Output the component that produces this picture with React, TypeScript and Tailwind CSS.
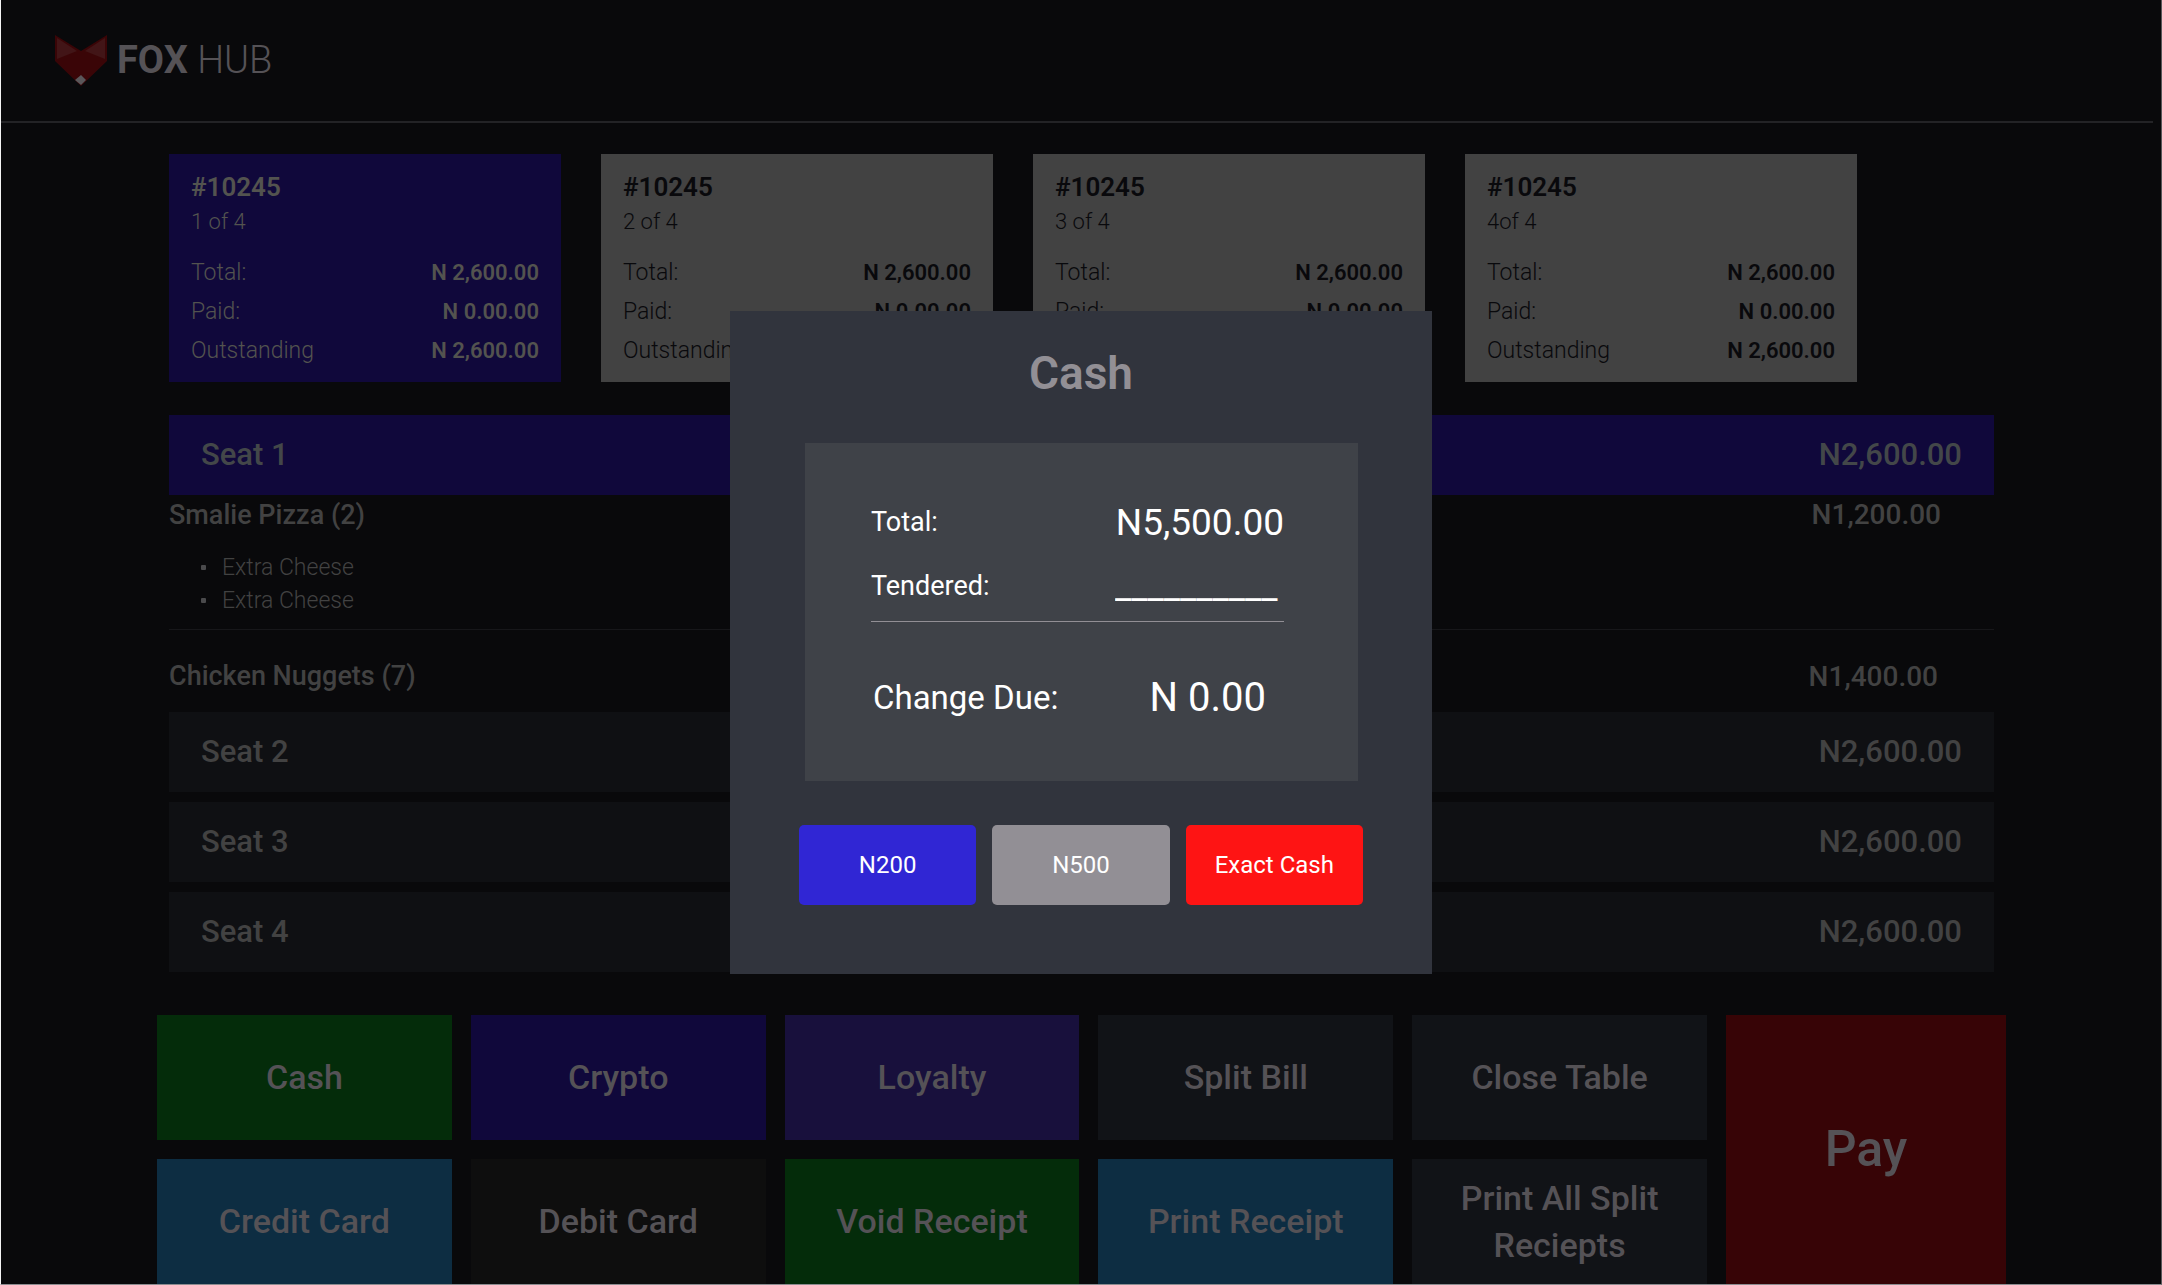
import clsx from "clsx";

interface Bill {
  part: string;
  active?: boolean;
}

interface Action {
  label: string;
  color: string;
}

const bills: Bill[] = [
  { part: "1 of 4", active: true },
  { part: "2 of 4" },
  { part: "3 of 4" },
  { part: "4of 4" },
];

const billRows = [
  { label: "Total:", value: "N 2,600.00" },
  { label: "Paid:", value: "N 0.00.00" },
  { label: "Outstanding", value: "N 2,600.00" },
];

const seats = ["Seat 2", "Seat 3", "Seat 4"];

const actions: Action[] = [
  { label: "Cash", color: "bg-[#042c0a]" },
  { label: "Crypto", color: "bg-[#10083b]" },
  { label: "Loyalty", color: "bg-[#18103c]" },
  { label: "Split Bill", color: "bg-[#111317]" },
  { label: "Close Table", color: "bg-[#111317]" },
  { label: "Credit Card", color: "bg-[#0d2d42]" },
  { label: "Debit Card", color: "bg-[#0e0e0e]" },
  { label: "Void Receipt", color: "bg-[#042c0a]" },
  { label: "Print Receipt", color: "bg-[#0d2d42]" },
  { label: "Print All Split Reciepts", color: "bg-[#111317]" },
];

function FoxLogo() {
  return (
    <svg width="52" height="51" viewBox="0 0 52 51" aria-hidden="true">
      <path d="M0 0 26 16 52 0v26L26 51 0 26Z" fill="#3a0507" />
      <path d="M2 3 22 16 2 24Z" fill="#421517" />
      <path d="M50 3 30 16 50 24Z" fill="#421517" />
      <path d="M26 40 31 45 26 50 20 45Z" fill="#5a575a" />
    </svg>
  );
}

function BillCard({ part, active }: Bill) {
  return (
    <article
      className={clsx(
        "h-[228px] px-[22px] pt-4",
        active ? "bg-[#10083b] text-[#53534f]" : "bg-[#424242] text-[#09090c]"
      )}
    >
      <h2 className="text-[26px] leading-[34px] font-semibold">#10245</h2>
      <p className="text-[22px] leading-[36px] font-light">{part}</p>
      <dl className="mt-[13px]">
        {billRows.map((row) => (
          <div key={row.label} className="flex justify-between leading-[39px]">
            <dt className="text-[23px] font-light">{row.label}</dt>
            <dd className="text-[22px] font-semibold">{row.value}</dd>
          </div>
        ))}
      </dl>
    </article>
  );
}

function SeatBar({ name, active }: { name: string; active?: boolean }) {
  return (
    <button
      type="button"
      className={clsx(
        "flex h-20 w-full items-center justify-between px-8 text-[31px] font-medium",
        active ? "bg-[#10083b] text-[#434749]" : "bg-[#0f1013] text-[#424242]"
      )}
    >
      <span>{name}</span>
      <span>N2,600.00</span>
    </button>
  );
}

function CashDialog() {
  return (
    <div className="absolute inset-0 flex items-center justify-center">
      <section
        role="dialog"
        aria-labelledby="cash-title"
        className="w-[702px] bg-[#31343d] px-[69px] pt-[34px] pb-[69px]"
      >
        <h1
          id="cash-title"
          className="text-center text-[46px] leading-[56px] font-semibold text-[#928f95]"
        >
          Cash
        </h1>
        <div className="mr-[5px] ml-[6px] mt-[42px] bg-[#3f4248] pt-12 pr-[74px] pb-[51px] pl-[66px] text-white">
          <div className="flex h-16 items-center justify-between">
            <span className="text-[27px]">Total:</span>
            <span className="text-[37px]">N5,500.00</span>
          </div>
          <div className="flex h-[67px] items-center justify-between border-b border-[#928f95] pb-[3px]">
            <label htmlFor="tendered" className="text-[27px]">
              Tendered:
            </label>
            <input
              id="tendered"
              type="text"
              defaultValue="__________"
              className="w-[169px] bg-transparent text-[36px] outline-none"
            />
          </div>
          <div className="mt-11 flex h-16 items-center justify-between pr-[18px] pl-[2px]">
            <span className="text-[33px]">Change Due:</span>
            <span className="text-[40px]">N 0.00</span>
          </div>
        </div>
        <div className="mt-11 grid grid-cols-3 gap-4 text-2xl text-white">
          <button type="button" className="h-20 rounded-[5px] bg-[#3026d4]">
            N200
          </button>
          <button type="button" className="h-20 rounded-[5px] bg-[#928f95]">
            N500
          </button>
          <button type="button" className="h-20 rounded-[5px] bg-[#fe1414]">
            Exact Cash
          </button>
        </div>
      </section>
    </div>
  );
}

export default function App() {
  return (
    <div className="relative min-h-screen border-r border-b border-l border-r-[#58585a] border-b-[#8c8c90] border-l-[#f4f4f4] bg-[#09090b] font-['Roboto','Liberation_Sans',sans-serif]">
      <header className="mr-2 flex h-[123px] items-center gap-[10px] border-b-2 border-[#232326] pl-[54px] text-[38px] text-[#555256]">
        <FoxLogo />
        <p>
          <span className="font-bold">FOX</span>{" "}
          <span className="font-light">HUB</span>
        </p>
      </header>

      <main>
        <div className="pt-[31px] pr-[167px] pl-[168px]">
          <div className="mr-[137px] grid grid-cols-4 gap-10">
            {bills.map((bill) => (
              <BillCard key={bill.part} {...bill} />
            ))}
          </div>

          <div className="mt-[33px] text-[#424242]">
            <SeatBar name="Seat 1" active />
            <div className="border-b border-[#17171a] pb-3">
              <div className="flex h-10 items-center justify-between pr-[53px] font-medium">
                <h3 className="text-[27px]">Smalie Pizza (2)</h3>
                <span className="text-[28px]">N1,200.00</span>
              </div>
              <ul className="mt-4 text-[23px] leading-[33px] font-light">
                {[1, 2].map((n) => (
                  <li key={n} className="flex items-center gap-4 pl-8">
                    <span className="size-[5px] rounded-[1px] bg-[#4a4a4c]" />
                    Extra Cheese
                  </li>
                ))}
              </ul>
            </div>
            <div className="flex h-[82px] items-center justify-between pt-[11px] pr-[56px] font-medium">
              <h3 className="text-[27px]">Chicken Nuggets (7)</h3>
              <span className="text-[28px]">N1,400.00</span>
            </div>
            <div className="space-y-[10px]">
              {seats.map((seat) => (
                <SeatBar key={seat} name={seat} />
              ))}
            </div>
          </div>
        </div>

        <div className="mt-[43px] flex gap-[19px] pr-[155px] pl-[156px] font-medium text-[#555256]">
          <div className="grid flex-1 grid-cols-5 gap-[19px] text-[34px] leading-[47px]">
            {actions.map((action) => (
              <button
                key={action.label}
                type="button"
                className={clsx("h-[125px] px-8", action.color)}
              >
                {action.label}
              </button>
            ))}
          </div>
          <button type="button" className="w-[280px] bg-[#370406] text-[50px]">
            Pay
          </button>
        </div>
      </main>

      <CashDialog />
    </div>
  );
}
